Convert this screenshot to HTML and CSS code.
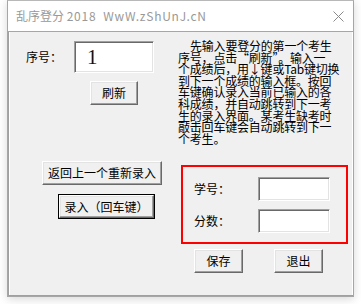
FILE: index.html
```html
<!DOCTYPE html>
<html lang="zh-CN">
<head>
<meta charset="utf-8">
<title>乱序登分 2018</title>
<link rel="stylesheet" href="styles.css">
</head>
<body>
<div class="window">
  <div class="titlebar">
    <span class="title">乱序登分 <span class="latin">2018&nbsp;&nbsp;WwW.zShUnJ.cN</span></span>
    <svg class="close" width="11" height="11" viewBox="0 0 11 11"><path d="M0.5 0.5 L10.5 10.5 M10.5 0.5 L0.5 10.5" stroke="#8a8a8a" stroke-width="1" fill="none"/></svg>
  </div>
  <div class="client">
    <div class="left">
      <div class="row-seq">
        <span class="label seq-label">序号：</span>
        <div class="field big"><span class="num">1</span></div>
      </div>
      <button class="btn btn-refresh">刷新</button>
      <button class="btn btn-back">返回上一个重新录入</button>
      <button class="btn default btn-enter">录入（回车键）</button>
    </div>
    <div class="right">
      <p class="note">先输入要登分的第一个考生<br>序号，点击“刷新”。输入一<br>个成绩后，用↓键或Tab键切换<br>到下一个成绩的输入框。按回<br>车键确认录入当前已输入的各<br>科成绩，并自动跳转到下一考<br>生的录入界面。某考生缺考时<br>敲击回车键会自动跳转到下一<br>个考生。</p>
      <div class="redbox">
        <div class="frow">
          <span class="label flabel">学号：</span>
          <div class="field small"></div>
        </div>
        <div class="frow">
          <span class="label flabel">分数：</span>
          <div class="field small"></div>
        </div>
      </div>
      <div class="actions">
        <button class="btn btn-act">保存</button>
        <button class="btn btn-act">退出</button>
      </div>
    </div>
  </div>
</div>
</body>
</html>
```
FILE: styles.css
```css
html, body {
  margin: 0;
  padding: 0;
  background: #ffffff;
}
body {
  width: 361px;
  height: 304px;
  overflow: hidden;
  font-family: "Noto Sans CJK SC", "Noto Sans", sans-serif;
  font-size: 12px;
  color: #000;
}
.window {
  margin-left: 7px;
  width: 347px;
  height: 297px;
  box-sizing: border-box;
  border: 1px solid #a6a6a6;
  border-top-color: #b8b8b8;
  background: #ffffff;
  box-shadow: 0 2px 9px rgba(0, 0, 0, 0.16);
  display: flex;
  flex-direction: column;
}
.titlebar {
  height: 30px;
  border-bottom: 1px solid #a6a6a6;
  display: flex;
  align-items: center;
  justify-content: space-between;
  padding: 0 9px 0 8px;
  background: #fff;
}
.title {
  color: #999;
  font-size: 12px;
  line-height: 16px;
  font-family: "Noto Sans CJK SC", "Noto Sans", sans-serif;
}
.title .latin {
  letter-spacing: 0.75px;
}
.close {
  display: block;
  margin-top: 1px;
}
.client {
  flex: 1;
  display: flex;
  background: #f0f0f0;
  border-left: 1px solid #a0a0a0;
  border-bottom: 1px solid #a0a0a0;
  box-shadow: inset 1px 0 #ffffff, inset -1px 0 #ffffff;
}
.left {
  width: 169px;
  display: flex;
  flex-direction: column;
  align-items: flex-start;
}
.right {
  flex: 1;
  display: flex;
  flex-direction: column;
  align-items: flex-start;
}
.label {
  font-size: 12px;
  line-height: 14px;
  white-space: nowrap;
}
.row-seq {
  display: flex;
  align-items: center;
  margin-top: 9px;
  margin-left: 17px;
}
.seq-label {
  width: 48px;
}
.field {
  box-sizing: border-box;
  background: #fff;
  border: 1px solid;
  border-color: #a0a0a0 #ffffff #ffffff #a0a0a0;
  box-shadow: inset 1px 1px #696969, inset -1px -1px #e3e3e3;
}
.field.big {
  width: 80px;
  height: 32px;
  display: flex;
  align-items: center;
  padding-left: 12px;
}
.num {
  font-family: "Liberation Serif", serif;
  font-size: 21px;
  line-height: 22px;
  color: #111;
}
.btn {
  box-sizing: border-box;
  height: 24px;
  padding: 0;
  margin: 0;
  font-family: "Noto Sans CJK SC", "Noto Sans", sans-serif;
  font-size: 12px;
  line-height: 14px;
  color: #000;
  background: #f0f0f0;
  border: 1px solid;
  border-color: #ffffff #696969 #696969 #ffffff;
  box-shadow: inset -1px -1px #a0a0a0, inset 1px 1px #e3e3e3;
  white-space: nowrap;
}
.btn.default {
  outline: 1px solid #000;
  outline-offset: 0;
}
.btn-refresh {
  width: 48px;
  margin-top: 8px;
  margin-left: 81px;
}
.btn-back {
  width: 120px;
  margin-top: 56px;
  margin-left: 33px;
}
.btn-enter {
  width: 95px;
  height: 23px;
  margin-top: 10px;
  margin-left: 50px;
}
.note {
  margin: 8px 0 0 0;
  height: 125px;
  width: 166px;
  font-size: 12px;
  line-height: 11.6px;
  text-indent: 12px;
  white-space: nowrap;
  letter-spacing: -0.2px;
}
.redbox {
  box-sizing: border-box;
  width: 167px;
  height: 79px;
  margin-left: 3px;
  border: 2px solid #ff0000;
  padding: 10px 0 0 11px;
  display: flex;
  flex-direction: column;
  gap: 8px;
}
.frow {
  display: flex;
  align-items: center;
}
.flabel {
  width: 64px;
}
.field.small {
  width: 72px;
  height: 24px;
}
.actions {
  display: flex;
  gap: 31px;
  margin-top: 5px;
  margin-left: 16px;
}
.btn-act {
  width: 49px;
}
```
